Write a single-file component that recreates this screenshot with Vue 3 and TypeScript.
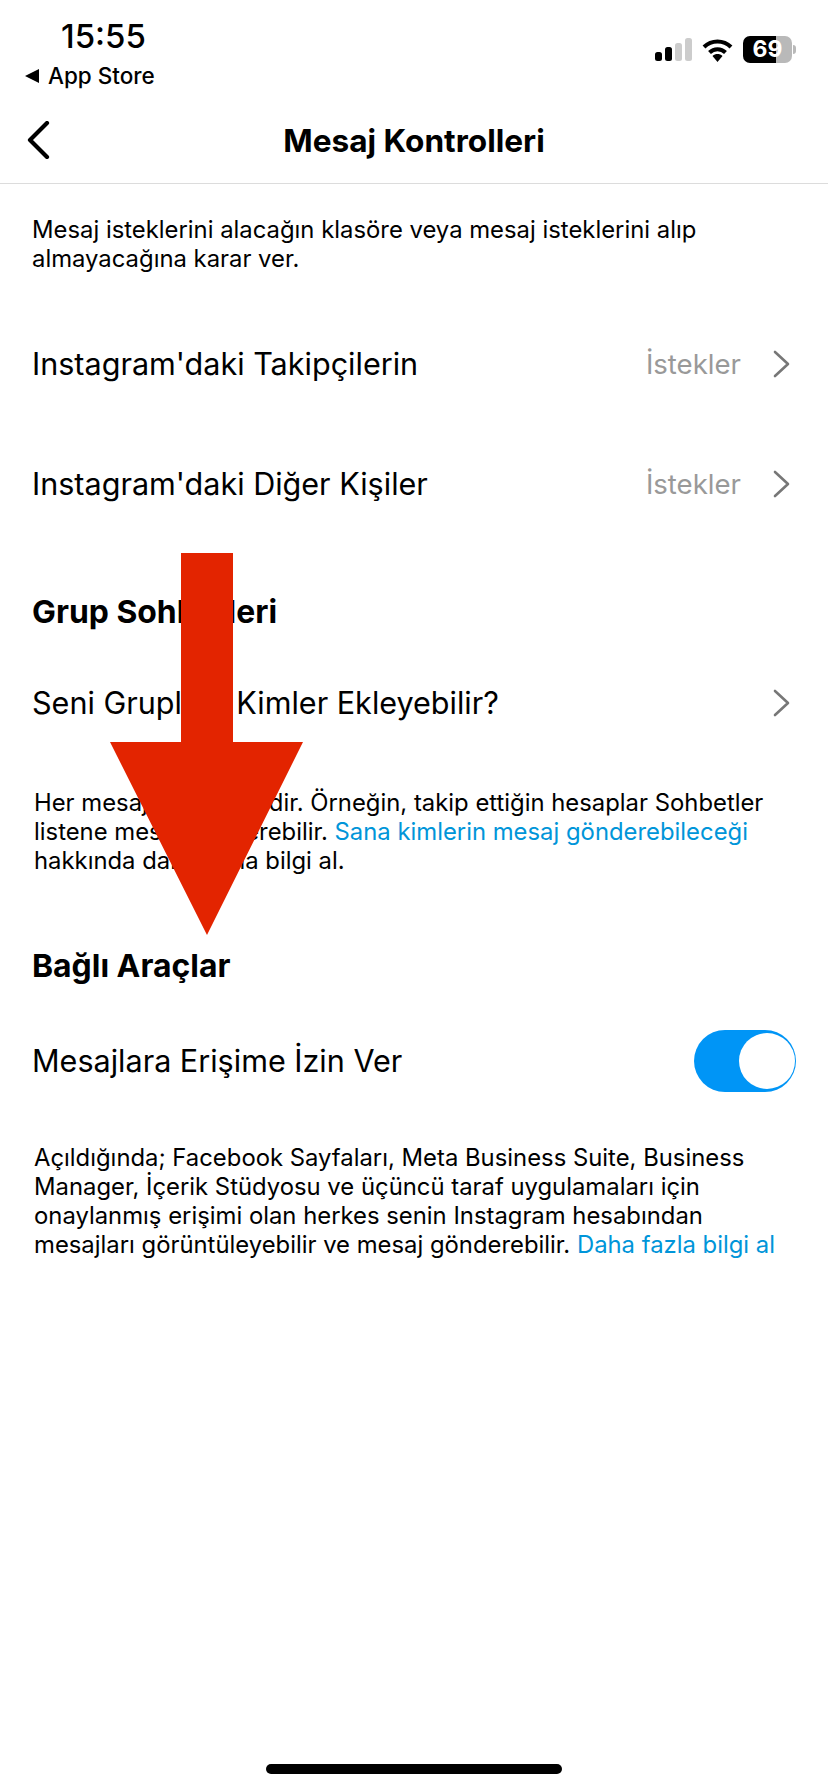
<script setup lang="ts">
interface Row {
  label: string
  value?: string
}

const topRows: Row[] = [
  { label: "Instagram'daki Takipçilerin", value: 'İstekler' },
  { label: "Instagram'daki Diğer Kişiler", value: 'İstekler' },
]
</script>

<template>
  <div class="screen">
    <header class="status-bar">
      <div class="status-left">
        <div class="time">15:55</div>
        <div class="back-app">
          <span class="back-tri"></span>
          <span>App Store</span>
        </div>
      </div>
      <div class="status-right">
        <svg class="signal" width="37" height="23" viewBox="0 0 37 23">
          <rect x="0" y="14" width="7" height="9" rx="2.5" fill="#000" />
          <rect x="10" y="9" width="7" height="14" rx="2.5" fill="#000" />
          <rect x="20" y="5" width="7" height="18" rx="2.5" fill="#ccc" />
          <rect x="30" y="0" width="7" height="23" rx="2.5" fill="#ccc" />
        </svg>
        <svg class="wifi" width="31" height="24" viewBox="0 0 31 24">
          <path d="M2 9 C9.5 1.5 21.5 1.5 29 9" fill="none" stroke="#000" stroke-width="4" />
          <path d="M7.5 14.5 C12 10 19 10 23.5 14.5" fill="none" stroke="#000" stroke-width="4" />
          <path d="M10.5 18 C13.5 15.4 17.5 15.4 20.5 18 L15.5 24 Z" fill="#000" />
        </svg>
        <div class="battery">
          <div class="battery-body">
            <span class="battery-level">69</span>
          </div>
          <span class="battery-nub"></span>
        </div>
      </div>
    </header>

    <nav class="nav">
      <svg class="nav-back" width="24" height="38" viewBox="0 0 24 38">
        <path d="M21 2 L4 19 L21 36" fill="none" stroke="#000" stroke-width="4.2" stroke-linecap="round" stroke-linejoin="round" />
      </svg>
      <h1 class="nav-title">Mesaj Kontrolleri</h1>
    </nav>

    <main class="content">
      <p class="intro">Mesaj isteklerini alacağın klasöre veya mesaj isteklerini alıp almayacağına karar ver.</p>

      <div class="rows">
        <div v-for="row in topRows" :key="row.label" class="row">
          <span class="row-label">{{ row.label }}</span>
          <span class="row-value">{{ row.value }}</span>
          <svg class="chevron" width="17" height="28" viewBox="0 0 17 28">
            <path d="M2 2 L15 14 L2 26" fill="none" stroke="#777" stroke-width="2.6" stroke-linecap="round" stroke-linejoin="round" />
          </svg>
        </div>
      </div>

      <h2 class="section-title group-title">Grup Sohbetleri</h2>
      <div class="row group-row">
        <span class="row-label">Seni Gruplara Kimler Ekleyebilir?</span>
        <svg class="chevron" width="17" height="28" viewBox="0 0 17 28">
          <path d="M2 2 L15 14 L2 26" fill="none" stroke="#777" stroke-width="2.6" stroke-linecap="round" stroke-linejoin="round" />
        </svg>
      </div>
      <p class="note group-note">
        Her mesaj istek değildir. Örneğin, takip ettiğin hesaplar Sohbetler<br />
        listene mesaj gönderebilir. <a class="link">Sana kimlerin mesaj gönderebileceği</a><br />
        hakkında daha fazla bilgi al.
      </p>

      <h2 class="section-title tools-title">Bağlı Araçlar</h2>
      <div class="row tools-row">
        <span class="row-label">Mesajlara Erişime İzin Ver</span>
        <div class="toggle"><span class="knob"></span></div>
      </div>
      <p class="note tools-note">
        Açıldığında; Facebook Sayfaları, Meta Business Suite, Business<br />
        Manager, İçerik Stüdyosu ve üçüncü taraf uygulamaları için<br />
        onaylanmış erişimi olan herkes senin Instagram hesabından<br />
        mesajları görüntüleyebilir ve mesaj gönderebilir. <a class="link">Daha fazla bilgi al</a>
      </p>
    </main>

    <!-- red annotation arrow drawn over the page -->
    <svg class="arrow" width="193" height="382" viewBox="0 0 193 382">
      <path d="M71 0 H123 V189 H193 L97 382 L0 189 H71 Z" fill="#e32400" />
    </svg>

    <div class="home-bar"></div>
  </div>
</template>

<style>
html,
body {
  margin: 0;
  background: #fff;
}
</style>

<style scoped>
.screen {
  position: relative;
  width: 828px;
  height: 1792px;
  overflow: hidden;
  background: #fff;
  color: #000;
  font-family: Inter, "Noto Sans", sans-serif;
}

.status-bar {
  display: flex;
  justify-content: space-between;
  height: 100px;
  box-sizing: border-box;
  padding: 18px 32px 0 25px;
}

.time {
  margin-left: 36px;
  font-size: 33px;
  line-height: 36px;
  font-weight: 500;
}

.back-app {
  display: flex;
  align-items: center;
  gap: 9px;
  margin-top: 5px;
  font-size: 22.5px;
  line-height: 34px;
  font-weight: 500;
}

.back-tri {
  width: 0;
  height: 0;
  border-top: 7px solid transparent;
  border-bottom: 7px solid transparent;
  border-right: 14px solid #000;
}

.status-right {
  display: flex;
  align-items: center;
  gap: 10px;
  height: 27px;
  margin-top: 18px;
}

.battery {
  display: flex;
  align-items: center;
  gap: 1px;
}

.battery-body {
  width: 49px;
  height: 27px;
  border-radius: 7px;
  overflow: hidden;
  background: linear-gradient(to right, #000 0 33px, #b9b9b9 33px);
  text-align: center;
}

.battery-level {
  display: block;
  color: #fff;
  font-size: 23px;
  line-height: 27px;
  font-weight: 700;
}

.battery-nub {
  width: 3px;
  height: 9px;
  border-radius: 0 3px 3px 0;
  background: #b9b9b9;
}

.nav {
  position: relative;
  display: flex;
  align-items: center;
  justify-content: center;
  height: 84px;
  padding-bottom: 2px;
  border-bottom: 1px solid #dcdcdc;
  box-sizing: border-box;
}

.nav-back {
  position: absolute;
  left: 26px;
  top: 21px;
}

.nav-title {
  margin: 0;
  font-size: 31.6px;
  font-weight: 700;
  line-height: 36px;
}

.content {
  padding: 0 32px;
}

.intro {
  margin: 31px 0 0;
  font-size: 23.85px;
  line-height: 29px;
}

.row {
  display: flex;
  align-items: center;
  height: 62px;
}

.rows {
  display: flex;
  flex-direction: column;
  gap: 58px;
  margin-top: 60px;
}

.row-label {
  flex: 1;
  font-size: 30.55px;
  line-height: 40px;
}

.row-value {
  margin-right: 32px;
  color: #999;
  font-size: 27.6px;
}

.chevron {
  margin-right: 6px;
}

.section-title {
  margin: 0;
  font-size: 31.9px;
  font-weight: 700;
  line-height: 36px;
}

.group-title {
  margin-top: 79px;
}

.group-row {
  margin-top: 42px;
}

.note {
  margin: 0 0 0 2px;
  font-size: 23.85px;
  line-height: 29px;
}

.group-note {
  margin-top: 54px;
}

.tools-title {
  margin-top: 73px;
}

.tools-row {
  margin-top: 46px;
}

.toggle {
  display: flex;
  justify-content: flex-end;
  align-items: center;
  width: 102px;
  height: 62px;
  border-radius: 31px;
  background: #0095f6;
}

.knob {
  width: 56px;
  height: 56px;
  margin-right: 1px;
  border-radius: 50%;
  background: #fff;
}

.tools-note {
  margin-top: 51px;
}

.link {
  color: #0095d9;
}

.arrow {
  position: absolute;
  left: 110px;
  top: 553px;
}

.home-bar {
  position: absolute;
  left: 266px;
  bottom: 18px;
  width: 296px;
  height: 10px;
  border-radius: 5px;
  background: #000;
}
</style>
